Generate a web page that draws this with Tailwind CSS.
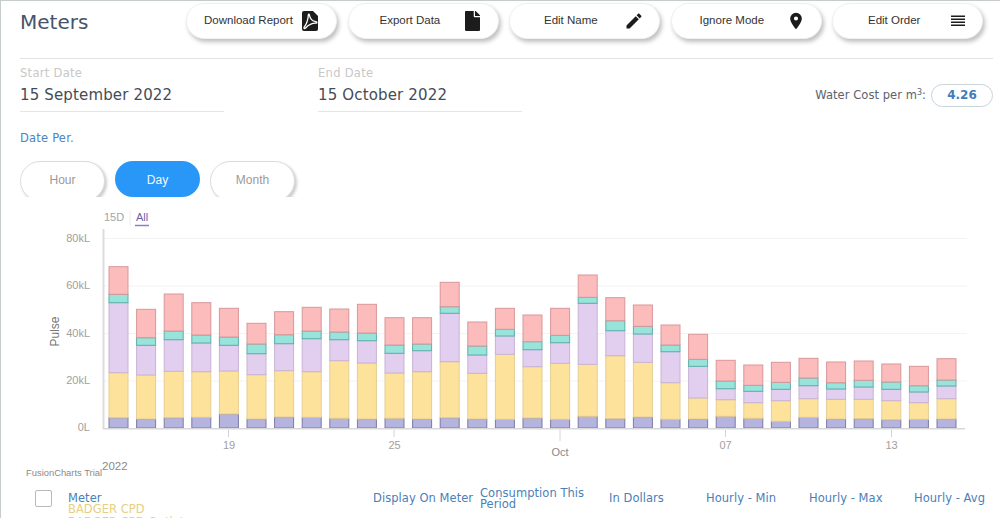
<!DOCTYPE html>
<html lang="en">

<head>
    <meta charset="UTF-8">
    <meta name="viewport" content="width=device-width, initial-scale=1.0">
    <script src="https://cdn.jsdelivr.net/npm/@tailwindcss/browser@4"></script>
    <title>Meters</title>
</head>

<body class="bg-white overflow-hidden font-['DejaVu_Sans',sans-serif]">
    <main class="w-[1000px] h-[518px] overflow-hidden border-t border-l border-[#c6cbcc] pl-[19px] pr-[7px]">
        <header class="h-[58px] flex items-start justify-between border-b border-[#dfe3e5] pr-[10px]">
            <h1 class="text-[20px] leading-[40px] pt-[1px] text-[#46546a]">Meters</h1>
            <div class="flex gap-[10.500px] pt-[2px] font-['Liberation_Sans',sans-serif] text-[11.500px] text-[#333]">
                <button class="w-[151px] h-[36px] rounded-full bg-white shadow-[2px_3px_4px_rgba(0,0,0,0.25)] border border-[#f0f0f0] flex items-center justify-between pl-[17px] pr-[18px]">
                    <span>Download Report</span>
                    <svg class="w-[16px] h-[20px]" viewBox="0 0 16 20">
                        <path d="M2 0H11L16 5V18a2 2 0 0 1-2 2H2a2 2 0 0 1-2-2V2a2 2 0 0 1 2-2Z" fill="#1c1c1c" />
                        <path d="M6.400 3.500C6.200 7.500 5 12.500 2.200 16.200 1.400 17.300 2.600 18 3.600 17 6 14.500 9.500 12 14 12.200c1.200 0 1.200-1.400 0-1.500C11 10.300 8 8 7.400 4c-.2-1-1-1.200-1-.5Z" fill="none" stroke="#fff" stroke-width="1.300" />
                    </svg>
                </button>
                <button class="w-[151px] h-[36px] rounded-full bg-white shadow-[2px_3px_4px_rgba(0,0,0,0.25)] border border-[#f0f0f0] flex items-center justify-between pl-[31px] pr-[18px]">
                    <span>Export Data</span>
                    <svg class="w-[15px] h-[20px]" viewBox="0 0 384 512">
                        <path fill="#1c1c1c" d="M224 136V0H24C10.700 0 0 10.700 0 24v464c0 13.300 10.700 24 24 24h336c13.300 0 24-10.700 24-24V160H248c-13.200 0-24-10.800-24-24zm160-14.100v6.100H256V0h6.100c6.400 0 12.500 2.500 17 7l97.900 98c4.500 4.500 7 10.600 7 16.900z" />
                    </svg>
                </button>
                <button class="w-[151px] h-[36px] rounded-full bg-white shadow-[2px_3px_4px_rgba(0,0,0,0.25)] border border-[#f0f0f0] flex items-center justify-between pl-[34px] pr-[15px]">
                    <span>Edit Name</span>
                    <svg class="w-[20px] h-[20px]" viewBox="0 0 24 24">
                        <path fill="#1c1c1c" d="M20.710 7.040c.39-.39.39-1.040 0-1.410l-2.340-2.340c-.37-.39-1.020-.39-1.410 0l-1.840 1.830 3.750 3.750M3 17.250V21h3.750L17.810 9.930l-3.750-3.750L3 17.250Z" />
                    </svg>
                </button>
                <button class="w-[151px] h-[36px] rounded-full bg-white shadow-[2px_3px_4px_rgba(0,0,0,0.25)] border border-[#f0f0f0] flex items-center justify-between pl-[28px] pr-[15px]">
                    <span>Ignore Mode</span>
                    <svg class="w-[20px] h-[20px]" viewBox="0 0 24 24">
                        <path fill="#1c1c1c" d="M12 11.500A2.500 2.500 0 0 1 9.500 9 2.500 2.500 0 0 1 12 6.500 2.500 2.500 0 0 1 14.500 9 2.500 2.500 0 0 1 12 11.500M12 2a7 7 0 0 0-7 7c0 5.250 7 13 7 13s7-7.750 7-13a7 7 0 0 0-7-7Z" />
                    </svg>
                </button>
                <button class="w-[151px] h-[36px] rounded-full bg-white shadow-[2px_3px_4px_rgba(0,0,0,0.25)] border border-[#f0f0f0] flex items-center justify-between pl-[35px] pr-[16px]">
                    <span>Edit Order</span>
                    <svg class="w-[16px] h-[14px]" viewBox="0 0 16 14">
                        <path fill="#1c1c1c" d="M1 1.500H15V3H1ZM1 4.500H15V6H1ZM1 7.500H15V9H1ZM1 10.500H15V12H1Z" />
                    </svg>
                </button>
            </div>
        </header>

        <section class="h-[53px] flex items-end">
            <div class="w-[204px] h-[53px] border-b border-[#e6e6e6]">
                <div class="text-[11.500px] leading-[14px] pt-[7px] tracking-[0.3px] text-[#c8c8c8]">Start Date</div>
                <div class="text-[15px] leading-[20px] pt-[5px] tracking-[0.15px] text-[#444c57]">15 September 2022</div>
            </div>
            <div class="w-[204px] h-[53px] ml-[94px] border-b border-[#e6e6e6]">
                <div class="text-[11.500px] leading-[14px] pt-[7px] tracking-[0.3px] text-[#c8c8c8]">End Date</div>
                <div class="text-[15px] leading-[20px] pt-[5px] tracking-[0.15px] text-[#444c57]">15 October 2022</div>
            </div>
            <div class="ml-auto flex items-center gap-[5px] h-[23px] mb-[5px]">
                <span class="text-[11.500px] tracking-[0.05px] text-[#5b636c]">Water Cost per m<sup class="text-[8px] -top-[4px]">3</sup>:</span>
                <span class="w-[62px] h-[23px] rounded-full border border-[#c9d3da] text-center text-[12px] leading-[21px] font-bold text-[#3f7cbc]">4.26</span>
            </div>
        </section>

        <div class="text-[11.500px] leading-[14px] pt-[19px] tracking-[0.2px] text-[#4a86c0]">Date Per.</div>

        <div class="flex gap-[10px] pt-[16px] h-[52px] overflow-hidden font-['Liberation_Sans',sans-serif] text-[12px]">
            <button class="w-[85px] h-[40px] rounded-[20px] border border-[#dcdcdc] bg-white text-[#9a9a9a] shadow-[2px_2px_3px_rgba(0,0,0,0.2)] pb-[3px]">Hour</button>
            <button class="w-[85px] h-[36px] rounded-[18px] bg-[#2897f8] text-[#f3f9ff] pt-[1px]">Day</button>
            <button class="w-[85px] h-[40px] rounded-[20px] border border-[#dcdcdc] bg-white text-[#9a9a9a] shadow-[2px_2px_3px_rgba(0,0,0,0.2)] pb-[3px]">Month</button>
        </div>

        <svg id="chart" class="block -ml-[20px] mt-[8px]" width="1000" height="283" viewBox="0 205 1000 283" font-family="Liberation Sans, sans-serif">
            <text x="104" y="221" font-size="11" fill="#a4a4a4">15D</text>
            <path d="M130 210V225" stroke="#eeeeee" />
            <text x="136" y="221" font-size="11" fill="#6a63a8">All</text>
            <path d="M135 225.500H149" stroke="#8a80c4" stroke-width="1.500" />

            <g stroke="#f3f3f3">
                <path d="M103 238.500H967" />
                <path d="M103 286H967" />
                <path d="M103 333.500H967" />
                <path d="M103 381H967" />
            </g>
            <path d="M103.500 229V429" stroke="#dcdcdc" stroke-width="2" />

            <g id="bars"></g>

            <path d="M103 428.800H965" stroke="#d8d8dc" stroke-width="1.500" />

            <g font-size="11" fill="#a0a0a0" text-anchor="end">
                <text x="90" y="242">80kL</text>
                <text x="90" y="289">60kL</text>
                <text x="90" y="337">40kL</text>
                <text x="90" y="384">20kL</text>
                <text x="90" y="431">0L</text>
            </g>
            <text transform="translate(59 331.500) rotate(-90)" font-size="12" fill="#777" text-anchor="middle">Pulse</text>

            <g stroke="#d4d4d4">
                <path d="M228.500 430V437" />
                <path d="M394 430V437" />
                <path d="M560 430V441" />
                <path d="M725.500 430V437" />
                <path d="M891.500 430V437" />
            </g>
            <g font-size="11" fill="#a0a0a0" text-anchor="middle">
                <text x="229" y="449">19</text>
                <text x="394.500" y="449">25</text>
                <text x="560" y="456" fill="#888">Oct</text>
                <text x="725.500" y="449">07</text>
                <text x="891.500" y="449">13</text>
            </g>
            <text x="102" y="470" font-size="11.500" fill="#8a8a8a">2022</text>
            <text x="26" y="475.500" font-size="9.400" fill="#8a8a8a">FusionCharts Trial</text>
        </svg>

        <section class="flex items-start text-[11.500px] leading-[10.500px] tracking-[0.05px] text-[#4a7fb8]">
            <span class="w-[17px] h-[17px] ml-[15px] mt-[2px] border border-[#b9b9b9] rounded-[2px]"></span>
            <div class="w-[305px] ml-[16px] pt-[5px]">
                <div>Meter</div>
                <div class="text-[#e6d083]">BADGER CPD</div>
                <div class="text-[#e6d083] mt-[3px]">BADGER CPD Outlet</div>
            </div>
            <div class="w-[107px] pt-[5px]">Display On Meter</div>
            <div class="w-[129px]">Consumption This Period</div>
            <div class="w-[97px] pt-[5px]">In Dollars</div>
            <div class="w-[103px] pt-[5px]">Hourly - Min</div>
            <div class="w-[105px] pt-[5px]">Hourly - Max</div>
            <div class="pt-[5px]">Hourly - Avg</div>
        </section>
    </main>

    <script>
        // y of each segment top, per day: blue, yellow, purple, teal, red
        const days = [
            [417.7, 372.7, 302.7, 294.3, 266.7], [419, 375, 345.3, 337.7, 309.3], [417.7, 371.3, 339.7, 331, 294],
            [417.3, 371.7, 343, 335, 302.7], [414, 371, 345.3, 337, 308.3], [419, 374.7, 353.7, 344, 323.3],
            [417, 370.7, 343.7, 334.7, 311.7], [417.3, 371.7, 338.7, 331, 307.3], [418.3, 360.7, 339.7, 332, 309],
            [419, 363, 340.7, 333, 304.3], [418.3, 373, 353.3, 345, 317.7], [419, 371.7, 350.7, 344, 317.7],
            [417.7, 361.7, 313.3, 306.7, 282.3], [419, 373.3, 355, 346, 322], [419.3, 354.3, 336, 329.3, 308.3],
            [418, 366.7, 349.7, 341.7, 315], [419.3, 363.3, 342.7, 335.3, 308.3], [416.3, 364.3, 303.3, 297.3, 275],
            [418.7, 355.7, 330.7, 320.7, 297.7], [417, 362.3, 334, 326.3, 305], [419.3, 382.7, 351.7, 345, 325],
            [419, 398, 366.3, 359.3, 334.3], [416.3, 399.7, 388.7, 381, 360.3], [418.3, 402.7, 391.3, 385.3, 365],
            [421.3, 400.7, 389.3, 382.3, 362.3], [417.3, 398.7, 385.7, 378, 358.3], [419, 399.3, 389, 382.7, 362],
            [418.7, 399.3, 387, 380.3, 361], [419.7, 400.7, 389.3, 382, 364], [419.3, 402.7, 392, 385.7, 366.3],
            [419, 398.7, 386, 380, 358.7]
        ];
        const fills = ["#b4b4de", "#fde29c", "#e2cff0", "#98e4da", "#fdbcbc"];
        const strokes = ["#7c7aa8", "#e6cd94", "#c9b3d4", "#5cb0ac", "#d8979a"];
        const base = 428;

        let out = "";
        days.forEach((tops, i) => {
            const x = 109 + i * 27.6;
            tops.forEach((top, j) => {
                const bottom = j === 0 ? base : tops[j - 1];
                out += `<rect x="${x}" y="${top}" width="19" height="${bottom - top}" fill="${fills[j]}" stroke="${strokes[j]}" stroke-width="1" />`;
            });
        });
        document.getElementById("bars").innerHTML = out;
    </script>
</body>

</html>
